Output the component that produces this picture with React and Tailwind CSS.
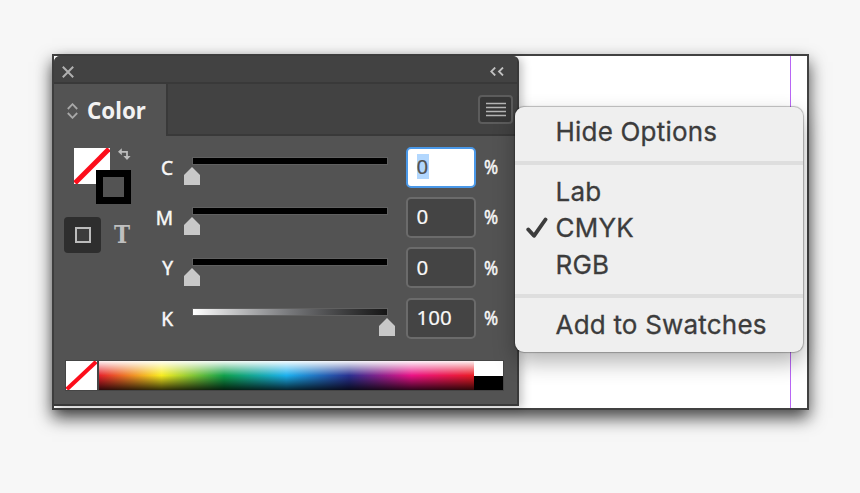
import React from "react";

const channels = [
  { label: "C", value: "0", thumb: 0, active: true },
  { label: "M", value: "0", thumb: 0 },
  { label: "Y", value: "0", thumb: 0 },
  { label: "K", value: "100", thumb: 195, ramp: true },
];

function NoneSlash({ className }) {
  return (
    <svg className={className} viewBox="0 0 36 36" preserveAspectRatio="none">
      <rect width="36" height="36" fill="#fff" />
      <path d="M1 35L35 1" stroke="#fc0d1b" strokeWidth="5" />
    </svg>
  );
}

function Channel({ label, value, thumb, active, ramp }) {
  return (
    <div className="flex h-[50.3px] items-center">
      <span className="-mt-px w-[19px] origin-right scale-x-[0.93] text-right text-[20.5px] leading-[24px] text-[#f8f8f8] [-webkit-text-stroke:0.5px_#f8f8f8]">{label}</span>
      <div className="relative ml-[19px] h-[36px] w-[196px] shrink-0">
        <div
          className={`mt-[8px] h-[8px] border border-[#606060] ${
            ramp ? "bg-linear-to-r from-white via-[#77787b] to-[#161616]" : "bg-black"
          }`}
        />
        <svg
          className="absolute top-[18px] h-[18px] w-[16px]"
          style={{ left: thumb - 8 }}
          viewBox="0 0 16 18"
        >
          <path d="M8 0L16 8V18H0V8Z" fill="#c8c8c8" />
        </svg>
      </div>
      <div
        className={`ml-[18px] flex h-[41px] w-[70px] shrink-0 items-center rounded-[5px] border-2 pl-[8.5px] text-[20.5px] ${
          active ? "border-[#4a98e8] bg-white text-[#535353]" : "border-[#6b6b6b] bg-[#444444] text-[#f8f8f8]"
        }`}
      >
        <span className={`-mt-px h-[25px] leading-[25px] [-webkit-text-stroke:0.2px] ${active ? "bg-[#b2d7fe] pr-px" : ""}`}>{value}</span>
      </div>
      <span className="ml-[8px] origin-left scale-x-[0.85] text-[20px] leading-[24px] text-[#f8f8f8] [-webkit-text-stroke:0.5px_#f8f8f8]">%</span>
    </div>
  );
}

function ColorPanel() {
  return (
    <section className="flex h-[350px] w-[465px] flex-col overflow-hidden rounded-t-[6px] border-r-2 border-b-2 border-[#393939] bg-[#535353] font-['Noto_Sans','Open_Sans',sans-serif] shadow-[3px_2px_10px_rgba(0,0,0,0.25)]">
      <div className="flex h-[28px] shrink-0 items-center justify-between border-b-2 border-[#393939] bg-[#424242] pt-[5px] pr-[13px] pl-[8px]">
        <svg className="h-[12px] w-[12px]" viewBox="0 0 12 12" fill="none" stroke="#b0b0b0" strokeWidth="2">
          <path d="M.8.8L11.2 11.2M11.2.8L.8 11.2" />
        </svg>
        <svg className="h-[9px] w-[14px]" viewBox="0 0 14 9" fill="none" stroke="#c0c0c0" strokeWidth="1.8">
          <path d="M5.2.5L1.2 4.5L5.2 8.5M13 .5L9 4.5L13 8.5" />
        </svg>
      </div>
      <div className="flex h-[52px] shrink-0">
        <div className="flex w-[112px] items-center gap-[9px] pt-[2px] pl-[13px]">
          <svg className="h-[16px] w-[11px]" viewBox="0 0 11 16" fill="none" stroke="#a8a8a8" strokeWidth="1.8">
            <path d="M.8 6L5.5 1.2L10.2 6M.8 10L5.5 14.8L10.2 10" />
          </svg>
          <span className="-mt-px text-[22.3px] font-bold text-[#f2f2f2]">Color</span>
        </div>
        <div className="flex flex-1 items-center justify-end border-b-2 border-l-2 border-[#393939] bg-[#424242] pr-[4px]">
          <div className="flex h-[29px] w-[35px] items-center justify-center rounded-[4px] border-2 border-[#5c5c5c] bg-[#363636]">
            <svg className="h-[15px] w-[20px]" viewBox="0 0 20 15" stroke="#b4b4b4" strokeWidth="1.6">
              <path d="M0 1.5H20M0 5.5H20M0 9.5H20M0 13.5H20" />
            </svg>
          </div>
        </div>
      </div>
      <div className="flex h-[224px] shrink-0 pt-[6px]">
        <div className="w-[100px] shrink-0 pt-[6px]">
          <div className="relative ml-[20px] h-[56px] w-[58px]">
            <NoneSlash className="h-[36px] w-[36px]" />
            <div className="absolute top-[22px] left-[22px] h-[34px] w-[35px] border-[7px] border-black bg-[#535353]" />
            <svg className="absolute top-[0px] left-[44px] h-[13px] w-[13px]" viewBox="0 0 13 13">
              <path d="M3 3.8H9V9" fill="none" stroke="#bcbcbc" strokeWidth="1.8" />
              <path d="M0 3.8L3.8 0.3V7.3ZM5.4 8H12.6L9 12Z" fill="#bcbcbc" />
            </svg>
          </div>
          <div className="mt-[13px] ml-[10px] flex h-[36px] items-center">
            <div className="flex h-[36px] w-[37px] items-center justify-center rounded-[4px] bg-[#2e2e2e]">
              <div className="h-[16px] w-[16px] border-2 border-[#bcbcbc] bg-[#3c3c3c]" />
            </div>
            <span className="ml-[12px] origin-center scale-x-[0.9] text-[24px] leading-[36px] font-bold text-[#bfbfbf] font-['DejaVu_Serif',serif]">T</span>
          </div>
        </div>
        <div>
          {channels.map((c) => (
            <Channel key={c.label} {...c} />
          ))}
        </div>
      </div>
      <div className="ml-[11px] flex h-[31px] w-[439px] border border-[#454545]">
        <NoneSlash className="h-full w-[31px]" />
        <div className="w-[2px] bg-[#454545]" />
        <div className="flex-1 bg-[linear-gradient(180deg,rgba(255,255,255,.95)_0%,rgba(255,255,255,0)_50%,rgba(0,0,0,0)_50%,rgba(0,0,0,.8)_100%),linear-gradient(90deg,#e5202b_0%,#f8ec20_16.67%,#10a04b_33.33%,#1bb0ee_50%,#2a3191_66.67%,#ea1286_83.33%,#ea1c24_100%)]" />
        <div className="flex w-[29px] flex-col">
          <div className="flex-1 bg-white" />
          <div className="flex-1 bg-black" />
        </div>
      </div>
    </section>
  );
}

function MenuItem({ children, checked }) {
  return (
    <div className="flex h-[36.7px] items-center">
      <div className="flex w-[40.5px] shrink-0 justify-center pl-[4px]">
        {checked && (
          <svg className="h-[22px] w-[22px]" viewBox="0 0 22 22" fill="none" stroke="#3c3c3c" strokeWidth="3.9" strokeLinecap="round" strokeLinejoin="round">
            <path d="M2.3 12.5L8 18.8L19.5 2.5" />
          </svg>
        )}
      </div>
      <span className="whitespace-nowrap [-webkit-text-stroke:0.3px_#3c3c3c]">{children}</span>
    </div>
  );
}

export default function App() {
  return (
    <div className="h-[493px] w-[860px] overflow-hidden bg-[#f7f7f7] pt-[54px] pl-[52px]">
      <main className="relative h-[356px] w-[757px] border-2 border-[#414141] bg-white shadow-[0_8px_16px_rgba(0,0,0,0.72)]">
        <div className="absolute top-0 right-[16px] h-full w-px bg-[#b866f5]" />
        <ColorPanel />
        <nav className="absolute top-[51px] left-[461px] h-[245px] w-[288px] rounded-[9px] bg-[#efefef] pt-[6px] text-[26px] tracking-[0.2px] text-[#3c3c3c] shadow-[0_0_1px_1px_rgba(0,0,0,0.25),0_10px_22px_rgba(0,0,0,0.3)] font-['Inter',sans-serif]">
          <MenuItem>Hide Options</MenuItem>
          <div className="mt-[11px] mb-[8px] h-[4px] bg-[#dedede]" />
          <MenuItem>Lab</MenuItem>
          <MenuItem checked>CMYK</MenuItem>
          <MenuItem>RGB</MenuItem>
          <div className="mt-[11px] mb-[8px] h-[4px] bg-[#dedede]" />
          <MenuItem>Add to Swatches</MenuItem>
        </nav>
      </main>
    </div>
  );
}
